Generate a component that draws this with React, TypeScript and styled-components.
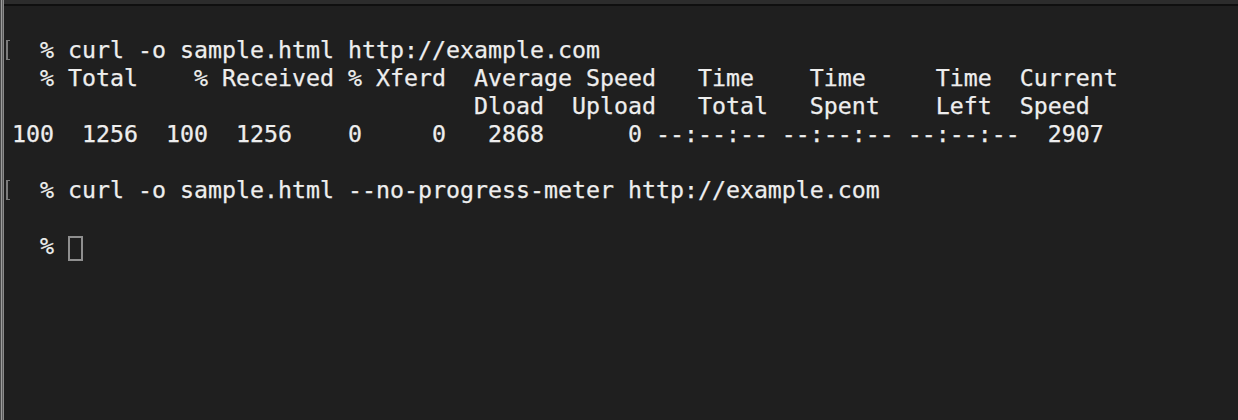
import React from "react";
import styled, { createGlobalStyle } from "styled-components";

const Global = createGlobalStyle`
  html, body { margin: 0; padding: 0; background: #1f1f1f; }
  body { overflow: hidden; }
`;

const Window = styled.div`
  display: flex;
  width: 1238px;
  height: 420px;
  background: #1f1f1f;
  overflow: hidden;
`;

const LeftEdge = styled.div`
  flex: 0 0 4px;
  background: linear-gradient(
    to right,
    #4a4a4a 0 1px,
    #9c9c9c 1px 2px,
    #5c5c5c 2px 3px,
    #8a8a8a 3px 4px
  );
`;

const Main = styled.div`
  flex: 1;
  display: flex;
  flex-direction: column;
  min-width: 0;
`;

const TopBar = styled.div`
  flex: 0 0 4px;
  background: #2c2c2c;
  border-bottom: 2px solid #0f0f0f;
`;

const Screen = styled.div`
  padding-top: 30px;
  display: flex;
  flex-direction: column;
  font-family: "DejaVu Sans Mono", "Liberation Mono", monospace;
  font-size: 23.25px;
  line-height: 28px;
  color: #eeeeee;
  -webkit-text-stroke: 0.25px #eeeeee;
`;

const Line = styled.div`
  display: flex;
  height: 28px;
`;

const Gutter = styled.div`
  flex: 0 0 8px;
  display: flex;
  align-items: center;
`;

const Mark = styled.span`
  display: block;
  width: 4px;
  height: 20px;
  margin-left: 2px;
  box-sizing: border-box;
  border: 1px solid #7c7c7c;
  border-left-width: 2px;
  border-right: none;
`;

const Text = styled.span`
  white-space: pre;
`;

const Cursor = styled.span`
  display: inline-block;
  width: 15px;
  height: 25px;
  box-sizing: border-box;
  border: 2px solid #8f8f8f;
  vertical-align: -7px;
`;

const lines: { text: string; mark?: boolean; cursor?: boolean }[] = [
  { text: "  % curl -o sample.html http://example.com", mark: true },
  { text: "  % Total    % Received % Xferd  Average Speed   Time    Time     Time  Current" },
  { text: "                                 Dload  Upload   Total   Spent    Left  Speed" },
  { text: "100  1256  100  1256    0     0   2868      0 --:--:-- --:--:-- --:--:--  2907" },
  { text: "" },
  { text: "  % curl -o sample.html --no-progress-meter http://example.com", mark: true },
  { text: "" },
  { text: "  % ", cursor: true },
];

export default function App() {
  return (
    <>
      <Global />
      <Window>
        <LeftEdge />
        <Main>
          <TopBar />
          <Screen>
            {lines.map((l, i) => (
              <Line key={i}>
                <Gutter>{l.mark && <Mark />}</Gutter>
                <Text>
                  {l.text}
                  {l.cursor && <Cursor />}
                </Text>
              </Line>
            ))}
          </Screen>
        </Main>
      </Window>
    </>
  );
}
